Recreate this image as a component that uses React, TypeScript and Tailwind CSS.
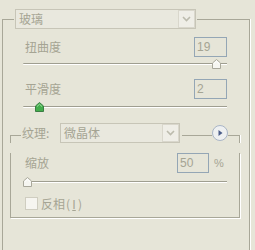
import React from 'react';

const line = 'border-[#a8a798]';

const Chevron = () => (
  <svg width="9" height="6" viewBox="0 0 9 6">
    <path d="M1 1 L4.5 4.5 L8 1" fill="none" stroke="#bcbbad" strokeWidth="1.6" />
  </svg>
);

const Thumb = ({ green }: { green?: boolean }) => (
  <svg width="9" height="10" viewBox="0 0 9 10">
    <path
      d="M4.5 0.5 L8.5 4 V9.5 H0.5 V4 Z"
      fill={green ? '#43ad4c' : '#f6f6f1'}
      stroke={green ? '#3b7d44' : '#a9a89b'}
    />
    <path d="M2 4.5 L4.5 2.3 L7 4.5" fill="none" stroke={green ? '#9ee0a0' : '#ffffff'} />
  </svg>
);

const Combo = ({ text, width }: { text: string; width: string }) => (
  <div className={`flex h-[20px] items-center border border-[#c7c5b7] bg-[#e9e8de] ${width}`}>
    <span className="flex-1 pl-[3px] text-[12px] leading-[14px]">{text}</span>
    <span className="flex h-[18px] w-[17px] items-center justify-center border border-[#d9d7cc] bg-[#efeee7]">
      <Chevron />
    </span>
  </div>
);

const Field = ({ value, width }: { value: string; width: string }) => (
  <div className={`flex h-[20px] items-center border border-[#94a6b5] pl-[2px] font-['Liberation_Sans',sans-serif] text-[12px] ${width}`}>
    {value}
  </div>
);

const Track = ({ x, green }: { x: number; green?: boolean }) => (
  <div className="relative h-[10px] w-[204px] pt-[4px]">
    <div className="h-[2px] rounded-l-full border-t border-[#9f9e90] bg-white" />
    <div className="absolute top-0" style={{ left: x }}>
      <Thumb green={green} />
    </div>
  </div>
);

const sliders = [
  { label: '扭曲度', value: '19', x: 189, green: false, top: 'mt-[8px]', gap: 'mt-[2px]' },
  { label: '平滑度', value: '2', x: 12, green: true, top: 'mt-[10px]', gap: 'mt-[3px]' },
];

export default function App() {
  return (
    <div className="h-[250px] w-[255px] overflow-hidden bg-[#e6e5d8] pl-[2px] pt-[9px] font-['Noto_Sans_CJK_SC',sans-serif] text-[#a5a493]">
      <div className="flex h-[241px] w-[248px] flex-col">
        <div className="flex h-[20px]">
          <div className={`mt-[10px] w-[12px] border-l border-t ${line}`} />
          <div className="ml-[1px]">
            <Combo text="玻璃" width="w-[181px]" />
          </div>
          <div className={`ml-[1px] mt-[10px] flex-1 border-r border-t ${line} shadow-[1px_0_0_#fff]`} />
        </div>

        <div className={`flex-1 border-l border-r ${line} shadow-[1px_0_0_#fff]`}>
          {sliders.map((s) => (
            <div key={s.label} className={`ml-[20px] ${s.top}`}>
              <div className="flex h-[20px] w-[204px] items-center justify-between">
                <span className="pl-[2px] text-[12px] leading-[14px]">{s.label}</span>
                <Field value={s.value} width="w-[33px]" />
              </div>
              <div className={s.gap}>
                <Track x={s.x} green={s.green} />
              </div>
            </div>
          ))}

          <div className="ml-[7px] mt-[11px] w-[230px]">
            <div className="flex h-[20px]">
              <div className={`mt-[12px] w-[11px] border-l border-t ${line}`} />
              <span className="ml-[1px] w-[38px] text-[12px] leading-[20px]">纹理:</span>
              <Combo text="微晶体" width="w-[120px]" />
              <div className={`ml-[2px] mt-[12px] flex-1 border-t ${line}`} />
              <div className="self-center">
                <svg width="16" height="16" viewBox="0 0 16 16">
                  <circle cx="8" cy="8" r="7.5" fill="#eef0f1" stroke="#a9b5c6" />
                  <path d="M6.5 5 L10.5 8 L6.5 11 Z" fill="#4b5d89" />
                </svg>
              </div>
              <div className={`mt-[12px] w-[12px] border-r border-t ${line} shadow-[1px_0_0_#fff]`} />
            </div>

            <div className={`border-b border-l border-r ${line} pb-[7px] pl-[12px] shadow-[1px_1px_0_#fff]`}>
              <div className="mt-[10px] flex h-[20px] w-[204px] items-center justify-between">
                <span className="pl-[2px] text-[12px] leading-[14px]">缩放</span>
                <div className="flex items-center">
                  <Field value="50" width="w-[32px]" />
                  <span className="w-[18px] pl-[5px] font-['Liberation_Sans',sans-serif] text-[11px]">%</span>
                </div>
              </div>
              <div className="mt-[4px]">
                <Track x={0} />
              </div>
              <div className="mt-[10px] flex h-[13px] items-center">
                <span className="ml-[2px] h-[13px] w-[13px] border border-[#cfcdc0] bg-[#f6f5f0]" />
                <span className="ml-[3px] flex text-[12px] leading-[14px]">
                  反相
                  <span className="inline-block w-[6px] text-center">(</span>
                  <span className="inline-block w-[6px] text-center underline">I</span>
                  <span className="inline-block w-[6px] text-center">)</span>
                </span>
              </div>
            </div>
          </div>
        </div>
      </div>
    </div>
  );
}
